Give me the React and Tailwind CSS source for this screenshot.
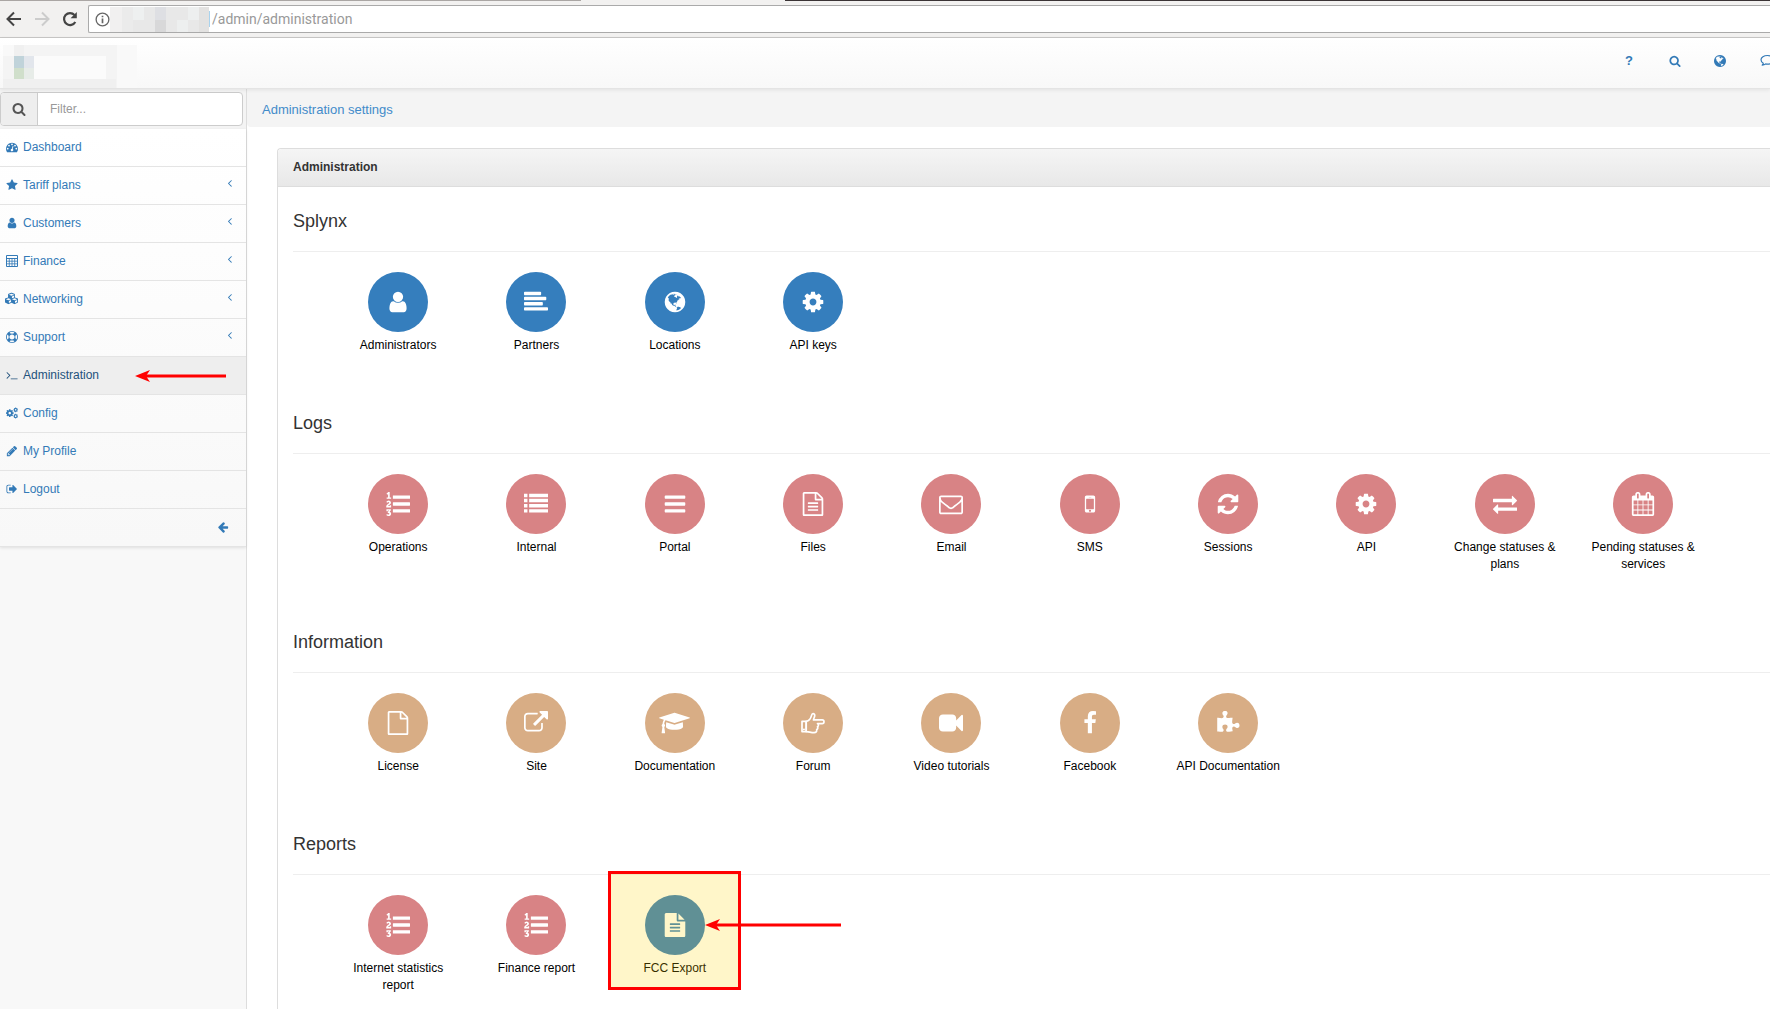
import React from "react";
import { FaCubes } from "react-icons/fa";

const COG =
  "M1152 896q0-106-75-181t-181-75-181 75-75 181 75 181 181 75 181-75 75-181zm512-109v222q0 12-8 23t-20 13l-185 28q-19 54-39 91 35 50 107 138 10 12 10 25t-9 23q-27 37-99 108t-94 71q-12 0-26-9l-138-108q-44 23-91 38-16 136-29 186-7 28-36 28h-222q-14 0-24.5-8.5t-11.5-21.5l-28-184q-49-16-90-37l-141 107q-10 9-25 9-14 0-25-11-126-114-165-168-7-10-7-23 0-12 8-23 15-21 51-66.5t54-70.5q-27-50-41-99l-183-27q-13-2-21-12.5t-8-23.5v-222q0-12 8-23t19-13l186-28q14-46 39-92-40-57-107-138-10-12-10-24 0-10 9-23 26-36 98.5-107.5t94.5-71.5q13 0 26 10l138 107q44-23 91-38 16-136 29-186 7-28 36-28h222q14 0 24.5 8.5t11.5 21.5l28 184q49 16 90 37l142-107q9-9 24-9 13 0 25 10 129 119 165 170 7 8 7 22 0 12-8 23-15 21-51 66.5t-54 70.5q26 50 41 98l183 28q13 2 21 12.5t8 23.5z";

const FILE =
  "M1596 380q28 28 48 76t20 88v1152q0 40-28 68t-68 28h-1344q-40 0-68-28t-28-68v-1600q0-40 28-68t68-28h896q40 0 88 20t76 48zm-444-244v376h376q-10-29-22-41l-313-313q-12-12-41-22zm384 1528v-1024h-416q-40 0-68-28t-28-68v-416h-768v1536h1280z";

const PATHS = {
  user: "M1536 1399q0 109-62.5 187t-150.5 78h-854q-88 0-150.5-78t-62.5-187q0-85 8.5-160.5t31.5-152 58.5-131 94-89 134.5-34.5q131 128 313 128t313-128q76 0 134.5 34.5t94 89 58.5 131 31.5 152 8.5 160.5zm-256-887q0 159-112.5 271.5t-271.5 112.5-271.5-112.5-112.5-271.5 112.5-271.5 271.5-112.5 271.5 112.5 112.5 271.5z",
  alignLeft:
    "M1792 1344v128q0 26-19 45t-45 19h-1664q-26 0-45-19t-19-45v-128q0-26 19-45t45-19h1664q26 0 45 19t19 45zm-384-384v128q0 26-19 45t-45 19h-1280q-26 0-45-19t-19-45v-128q0-26 19-45t45-19h1280q26 0 45 19t19 45zm256-384v128q0 26-19 45t-45 19h-1536q-26 0-45-19t-19-45v-128q0-26 19-45t45-19h1536q26 0 45 19t19 45zm-384-384v128q0 26-19 45t-45 19h-1152q-26 0-45-19t-19-45v-128q0-26 19-45t45-19h1152q26 0 45 19t19 45z",
  globe:
    "M896 128q209 0 385.5 103t279.5 279.5 103 385.5-103 385.5-279.5 279.5-385.5 103-385.5-103-279.5-279.5-103-385.5 103-385.5 279.5-279.5 385.5-103zm274 521q-2 1-9.5 9.5t-13.5 9.5q2 0 4.5-5t5-11 3.5-7q6-7 22-15 14-6 52-12 34-8 51 11-2-2 9.5-13t14.5-12q3-2 15-4.5t15-7.5l2-22q-12 1-17.5-7t-6.5-21q0 2-6 8 0-7-4.5-8t-11.5 1-9 1q-10-3-15-7.5t-8-16.5-4-15q-2-5-9.5-11t-9.5-10q-1-2-2.5-5.5t-3-6.5-4-5.5-5.5-2.5-7 5-7.5 10-4.5 5q-3-2-6-1.5t-4.5 1-4.5 3-5 3.5q-3 2-8.5 3t-8.5 2q15-5-1-11-10-4-16-3 9-4 7.5-12t-8.5-14h5q-1-4-8.5-8.5t-17.5-8.5-13-6q-8-5-34-9.5t-33-.5q-5 6-4.5 10.5t4 14 3.5 12.5q1 6-5.5 13t-6.5 12q0 7 14 15.5t10 21.5q-3 8-16 16t-16 12q-5 8-1.5 18.5t10.5 16.5q2 2 1.5 4t-3.5 4.5-5.5 4-6.5 3.5l-3 2q-11 5-20.5-6t-13.5-26q-7-25-16-30-23-8-29 1-5-13-41-26-25-9-58-4 6-1 0-15-7-15-19-12 3-6 4-17.5t1-13.5q3-13 12-23 1-1 7-8.5t9.5-13.5.5-6q35 4 50-11 5-5 11.5-17t10.5-17q9-6 14-5.5t14.5 5.5 14.5 5q14 1 15.5-11t-7.5-20q12 1 3-17-4-7-8-9-12-4-27 5-8 4 2 8-1-1-9.5 10.5t-16.5 17.5-16-5q-1-1-5.5-13.5t-9.5-13.5q-8 0-16 15 3-8-11-15t-24-8q19-12-8-27-7-4-20.5-5t-19.5 4q-5 7-5.5 11.5t5 8 10.5 5.5 11.5 4 8.5 3q14 10 8 14-2 1-8.5 3.5t-11.5 4.5-6 4q-3 4 0 14t-2 14q-5-5-9-17.5t-7-16.5q7 9-25 6l-10-1q-4 0-16 2t-20.5 1-13.5-8q-4-8 0-20 1-4 4-2-4-3-11-9.5t-10-8.5q-46 15-94 41 6 1 12-1 5-2 13-6.5t10-5.5q34-14 42-7l5-5q14 16 20 25-7-4-30-1-20 6-22 12 7 12 5 18-4-3-11.5-10t-14.5-11-15-5q-16 0-22 1-146 80-235 222 7 7 12 8 4 1 5 9t2.5 11 11.5-3q9 8 3 19 1-1 44 27 19 17 21 21 3 11-10 18-1-2-9-9t-9-4q-3 5 .5 18.5t10.5 12.5q-7 0-9.5 16t-2.5 35.5-1 23.5l2 1q-3 12 5.5 34.5t21.5 19.5q-13 3 20 43 6 8 8 9 3 2 12 7.5t15 10 10 10.5q4 5 10 22.5t14 23.5q-2 6 9.5 20t10.5 23q-1 0-2.5 1t-2.5 1q3 7 15.5 14t15.5 13q1 3 2 10t3 11 8 2q2-20-24-62-15-25-17-29-3-5-5.5-15.5t-4.5-14.5q2 0 6 1.5t8.5 3.5 7.5 4 2 3q-3 7 2 17.5t12 18.5 17 19 12 13q6 6 14 19.5t0 13.5q9 0 20 10.5t17 19.5q5 8 8 26t5 24q2 7 8.5 13.5t12.5 9.5l16 8 13 7q5 2 18.5 10.5t21.5 11.5q10 4 16 4t14.5-2.5 13.5-3.5q15-2 29 15t21 21q36 19 55 11-2 1 .5 7.5t8 15.5 9 14.5 5.5 8.5q5 6 18 15t18 15q6-4 7-9-3 8 7 20t18 10q14-3 14-32-31 15-49-18 0-1-2.5-5.5t-4-8.5-2.5-8.5 0-7.5 5-3q9 0 10-3.5t-2-12.5-4-13q-1-8-11-20t-12-15q-5 9-16 8t-16-9q0 1-1.5 5.5t-1.5 6.5q-13 0-15-1 1-3 2.5-17.5t3.5-22.5q1-4 5.5-12t7.5-14.5 4-12.5-4.5-9.5-17.5-2.5q-19 1-26 20-1 3-3 10.5t-5 11.5-9 7q-7 3-24 2t-24-5q-13-8-22.5-29t-9.5-37q0-10 2.5-26.5t3-25-5.5-24.5q3-2 9-9.5t10-10.5q2-1 4.5-1.5t4.5 0 4-1.5 3-6q-1-1-4-3-3-3-4-3 7 3 28.5-1.5t27.5 1.5q15 11 22-2 0-1-2.5-9.5t-.5-13.5q5 27 29 9 3 3 15.5 5t17.5 5q3 2 7 5.5t5.5 4.5 5-.5 8.5-6.5q10 14 12 24 11 40 19 44 7 3 11 2t4.5-9.5 0-14-1.5-12.5l-1-8v-18l-1-8q-15-3-18.5-12t1.5-18.5 15-18.5q1-1 8-3.5t15.5-6.5 12.5-8q21-19 15-35 7 0 11-9-1 0-5-3t-7.5-5-4.5-2q9-5 2-16 5-3 7.5-11t7.5-10q9 12 21 2 8-8 1-16 5-7 20.5-10.5t18.5-9.5q7 2 8-2t1-12 3-12q4-5 15-9t13-5l17-11q3-4 0-4 18 2 31-11 10-11-6-20 3-6-3-9.5t-15-5.5q3-1 11.5-.5t10.5-1.5q15-10-7-16-17-5-43 12zm-163 877q206-36 351-189-3-3-12.5-4.5t-12.5-3.5q-18-7-24-8 1-7-2.5-13t-8-9-12.5-8-11-7q-2-2-7-6t-7-5.5-7.5-4.5-8.5-2-10 1l-3 1q-3 1-5.5 2.5t-5.5 3-4 3 0 2.5q-21-17-36-22-5-1-11-5.5t-10.5-7-10-1.5-11.5 7q-5 5-6 15t-2 13q-7-5 0-17.5t2-18.5q-3-6-10.5-4.5t-12 4.5-11.5 8.5-9 6.5-8.5 5.5-8.5 7.5q-3 4-6 12t-5 11q-2-4-11.5-6.5t-9.5-5.5q2 10 4 35t5 38q7 31-12 48-27 25-29 40-4 22 12 26 0 7-8 20.5t-7 21.5q0 6 2 16z",
  cog: COG,
  listOl:
    "M381 1620q0 80-54.5 126t-135.5 46q-106 0-172-66l57-88q49 45 106 45 29 0 50.5-14.5t21.5-42.5q0-64-105-56l-26-56q8-10 32.5-43.5t42.5-54 37-38.5v-1q-16 0-48.5 1t-48.5 1v53h-106v-152h333v88l-95 115q51 12 81 49t30 88zm2-627v159h-362q-6-36-6-54 0-51 23.5-93t56.5-68 66-47.5 56.5-43.5 23.5-45q0-25-14.5-38.5t-39.5-13.5q-46 0-81 58l-85-59q24-51 71.5-79.5t105.5-28.5q73 0 123 41.5t50 112.5q0 50-34 91.5t-75 64.5-75.5 50.5-35.5 52.5h127v-60h105zm1409 319v192q0 13-9.5 22.5t-22.5 9.5h-1216q-13 0-22.5-9.5t-9.5-22.5v-192q0-14 9-23t23-9h1216q13 0 22.5 9.5t9.5 22.5zm-1408-899v99h-335v-99h107q0-41 .5-121.5t.5-121.5v-12h-2q-8 17-50 54l-71-76 136-127h106v404h108zm1408 387v192q0 13-9.5 22.5t-22.5 9.5h-1216q-13 0-22.5-9.5t-9.5-22.5v-192q0-14 9-23t23-9h1216q13 0 22.5 9.5t9.5 22.5zm0-512v192q0 13-9.5 22.5t-22.5 9.5h-1216q-13 0-22.5-9.5t-9.5-22.5v-192q0-13 9.5-22.5t22.5-9.5h1216q13 0 22.5 9.5t9.5 22.5z",
  list: "M0 1280h256v256h-256zM384 1280h1408v256h-1408zM0 896h256v256h-256zM384 896h1408v256h-1408zM0 512h256v256h-256zM384 512h1408v256h-1408zM0 128h256v256h-256zM384 128h1408v256h-1408z",
  bars: "M1664 1344v128q0 26-19 45t-45 19h-1408q-26 0-45-19t-19-45v-128q0-26 19-45t45-19h1408q26 0 45 19t19 45zm0-512v128q0 26-19 45t-45 19h-1408q-26 0-45-19t-19-45v-128q0-26 19-45t45-19h1408q26 0 45 19t19 45zm0-512v128q0 26-19 45t-45 19h-1408q-26 0-45-19t-19-45v-128q0-26 19-45t45-19h1408q26 0 45 19t19 45z",
  file: FILE,
  fileText:
    FILE +
    "m-1024-864q0-14 9-23t23-9h704q14 0 23 9t9 23v64q0 14-9 23t-23 9h-704q-14 0-23-9t-9-23v-64zm736 224q14 0 23 9t9 23v64q0 14-9 23t-23 9h-704q-14 0-23-9t-9-23v-64q0-14 9-23t23-9h704zm0 256q14 0 23 9t9 23v64q0 14-9 23t-23 9h-704q-14 0-23-9t-9-23v-64q0-14 9-23t23-9h704z",
  fileSolid:
    "M1596 476q14 14 28 36h-472v-472q22 14 36 28zm-476 164h544v1056q0 40-28 68t-68 28h-1344q-40 0-68-28t-28-68v-1600q0-40 28-68t68-28h800v544q0 40 28 68t68 28zm160 736v-64q0-14-9-23t-23-9h-704q-14 0-23 9t-9 23v64q0 14 9 23t23 9h704q14 0 23-9t9-23zm0-256v-64q0-14-9-23t-23-9h-704q-14 0-23 9t-9 23v64q0 14 9 23t23 9h704q14 0 23-9t9-23zm0-256v-64q0-14-9-23t-23-9h-704q-14 0-23 9t-9 23v64q0 14 9 23t23 9h704q14 0 23-9t9-23z",
  envelope:
    "M1664 1504v-768q-32 36-69 66-268 206-426 338-51 43-83 67t-86.5 48.5-102.5 24.5h-2q-48 0-102.5-24.5t-86.5-48.5-83-67q-158-132-426-338-37-30-69-66v768q0 13 9.5 22.5t22.5 9.5h1472q13 0 22.5-9.5t9.5-22.5zm0-1051v-24.5l-.5-13-3-12.5-5.5-9-9-7.5-14-2.5h-1472q-13 0-22.5 9.5t-9.5 22.5q0 168 147 284 193 152 401 317 6 5 35 29.5t46 37.5 44.5 31.5 50.5 27.5 43 9h2q20 0 43-9t50.5-27.5 44.5-31.5 46-37.5 35-29.5q208-165 401-317 54-43 100.5-115.5t46.5-131.5zm128-37v1088q0 66-47 113t-113 47h-1472q-66 0-113-47t-47-113v-1088q0-66 47-113t113-47h1472q66 0 113 47t47 113z",
  mobile:
    "M976 1408q0-33-23.5-56.5t-56.5-23.5-56.5 23.5-23.5 56.5 23.5 56.5 56.5 23.5 56.5-23.5 23.5-56.5zm208-160v-704q0-13-9.5-22.5t-22.5-9.5h-512q-13 0-22.5 9.5t-9.5 22.5v704q0 13 9.5 22.5t22.5 9.5h512q13 0 22.5-9.5t9.5-22.5zm-192-848q0-16-16-16h-160q-16 0-16 16t16 16h160q16 0 16-16zm288-16v1024q0 52-38 90t-90 38h-512q-52 0-90-38t-38-90v-1024q0-52 38-90t90-38h512q52 0 90 38t38 90z",
  refresh:
    "M1639 1056q0 5-1 7-64 268-268 434.5t-478 166.5q-146 0-282.5-55t-243.5-157l-129 129q-19 19-45 19t-45-19-19-45v-448q0-26 19-45t45-19h448q26 0 45 19t19 45-19 45l-137 137q71 66 161 102t187 36q134 0 250-65t186-179q11-17 53-117 8-23 30-23h192q13 0 22.5 9.5t9.5 22.5zm25-800v448q0 26-19 45t-45 19h-448q-26 0-45-19t-19-45 19-45l138-138q-148-137-349-137-134 0-250 65t-186 179q-11 17-53 117-8 23-30 23h-199q-13 0-22.5-9.5t-9.5-22.5v-7q65-268 270-434.5t480-166.5q146 0 284 55.5t245 156.5l130-129q19-19 45-19t45 19 19 45z",
  exchange:
    "M1792 1184v192q0 13-9.5 22.5t-22.5 9.5h-1376v192q0 13-9.5 22.5t-22.5 9.5q-12 0-24-10l-319-320q-9-9-9-22 0-14 9-23l320-320q9-9 23-9 13 0 22.5 9.5t9.5 22.5v192h1376q13 0 22.5 9.5t9.5 22.5zm0-544q0 14-9 23l-320 320q-9 9-23 9-13 0-22.5-9.5t-9.5-22.5v-192h-1376q-13 0-22.5-9.5t-9.5-22.5v-192q0-13 9.5-22.5t22.5-9.5h1376v-192q0-14 9-23t23-9q12 0 24 10l319 319q9 9 9 23z",
  calendar:
    "M192 1664h288v-288h-288v288zm352 0h320v-288h-320v288zm-352-352h288v-320h-288v320zm352 0h320v-320h-320v320zm-352-384h288v-288h-288v288zm736 736h320v-288h-320v288zm-384-736h320v-288h-320v288zm768 736h288v-288h-288v288zm-384-352h320v-320h-320v320zm-352-864v-288q0-13-9.5-22.5t-22.5-9.5h-64q-13 0-22.5 9.5t-9.5 22.5v288q0 13 9.5 22.5t22.5 9.5h64q13 0 22.5-9.5t9.5-22.5zm736 864h288v-320h-288v320zm-384-384h320v-288h-320v288zm384 0h288v-288h-288v288zm32-480v-288q0-13-9.5-22.5t-22.5-9.5h-64q-13 0-22.5 9.5t-9.5 22.5v288q0 13 9.5 22.5t22.5 9.5h64q13 0 22.5-9.5t9.5-22.5zm384-64v1280q0 52-38 90t-90 38h-1408q-52 0-90-38t-38-90v-1280q0-52 38-90t90-38h128v-96q0-66 47-113t113-47h64q66 0 113 47t47 113v96h384v-96q0-66 47-113t113-47h64q66 0 113 47t47 113v96h128q52 0 90 38t38 90z",
  external:
    "M1408 928v320q0 119-84.5 203.5t-203.5 84.5h-832q-119 0-203.5-84.5t-84.5-203.5v-832q0-119 84.5-203.5t203.5-84.5h704q14 0 23 9t9 23v64q0 14-9 23t-23 9h-704q-66 0-113 47t-47 113v832q0 66 47 113t113 47h832q66 0 113-47t47-113v-320q0-14 9-23t23-9h64q14 0 23 9t9 23zm384-864v512q0 26-19 45t-45 19-45-19l-176-176-652 652q-10 10-23 10t-23-10l-114-114q-10-10-10-23t10-23l652-652-176-176q-19-19-19-45t19-45 45-19h512q26 0 45 19t19 45z",
  video:
    "M1792 352v1088q0 42-39 59-13 5-25 5-27 0-45-19l-403-403v166q0 119-84.5 203.5t-203.5 84.5h-704q-119 0-203.5-84.5t-84.5-203.5v-704q0-119 84.5-203.5t203.5-84.5h704q119 0 203.5 84.5t84.5 203.5v165l403-402q18-19 45-19 12 0 25 5 39 17 39 59z",
  facebook:
    "M1343 12v264h-157q-86 0-116 36t-30 108v189h293l-39 296h-254v759h-306v-759h-255v-296h255v-218q0-186 104-288.5t277-102.5q147 0 228 12z",
  puzzle:
    "M1755 1083q0 81-44.5 135t-123.5 54q-41 0-77.5-17.5t-59-38-56.5-38-71-17.5q-110 0-110 124 0 39 16 115t15 115v5q-22 0-33 1-34 3-97.5 11.5t-115.5 13.5-98 5q-61 0-103-26.5t-42-83.5q0-37 17.5-71t38-56.5 38-59 17.5-77.5q0-79-54-123.5t-135-44.5q-84 0-143 45.5t-59 127.5q0 43 15 83t33.5 64.5 33.5 53 15 50.5q0 45-46 89-37 35-117 35-95 0-245-24-9-2-27.5-4t-27.5-4l-13-2q-1 0-3-1-2 0-2-1v-1024q2 1 17.5 3.5t34 5 21.5 3.5q150 24 245 24 80 0 117-35 46-44 46-89 0-22-15-50.5t-33.5-53-33.5-64.5-15-83q0-82 59-127.5t144-45.5q80 0 134 44.5t54 123.5q0 41-17.5 77.5t-38 59-38 56.5-17.5 71q0 57 42 83.5t103 26.5q64 0 180-15t163-17v2q-1 2-3.5 17.5t-5 34-3.5 21.5q-24 150-24 245 0 80 35 117 44 46 89 46 22 0 50.5-15t53-33.5 64.5-33.5 83-15q82 0 127.5 59t45.5 143z",
  dashboard:
    "M384 1152q0-53-37.5-90.5t-90.5-37.5-90.5 37.5-37.5 90.5 37.5 90.5 90.5 37.5 90.5-37.5 37.5-90.5zm192-448q0-53-37.5-90.5t-90.5-37.5-90.5 37.5-37.5 90.5 37.5 90.5 90.5 37.5 90.5-37.5 37.5-90.5zm428 481l101-382q6-26-7.5-48.5t-38.5-29.5-48 6.5-30 39.5l-101 382q-60 5-107 43.5t-63 98.5q-20 77 20 146t117 89 146-20 89-117q16-60-6-117t-72-91zm660-33q0-53-37.5-90.5t-90.5-37.5-90.5 37.5-37.5 90.5 37.5 90.5 90.5 37.5 90.5-37.5 37.5-90.5zm-640-640q0-53-37.5-90.5t-90.5-37.5-90.5 37.5-37.5 90.5 37.5 90.5 90.5 37.5 90.5-37.5 37.5-90.5zm448 192q0-53-37.5-90.5t-90.5-37.5-90.5 37.5-37.5 90.5 37.5 90.5 90.5 37.5 90.5-37.5 37.5-90.5zm320 448q0 261-141 483-19 29-54 29h-1402q-35 0-54-29-141-221-141-483 0-182 71-348t191-286 286-191 348-71 348 71 286 191 191 286 71 348z",
  star: "M1728 647q0 22-26 48l-363 354 86 500q1 7 1 20 0 21-10.5 35.5t-30.5 14.5q-19 0-40-12l-449-236-449 236q-22 12-40 12-21 0-31.5-14.5t-10.5-35.5q0-6 2-20l86-500-364-354q-25-27-25-48 0-37 56-46l502-73 225-455q19-41 49-41t49 41l225 455 502 73q56 9 56 46z",
  support:
    "M896 0q182 0 348 71t286 191 191 286 71 348-71 348-191 286-286 191-348 71-348-71-286-191-191-286-71-348 71-348 191-286 286-191 348-71zm0 128q-190 0-361 90l194 194q82-28 167-28t167 28l194-194q-171-90-361-90zm-678 1129l194-194q-28-82-28-167t28-167l-194-194q-90 171-90 361t90 361zm678 407q190 0 361-90l-194-194q-82 28-167 28t-167-28l-194 194q171 90 361 90zm0-384q159 0 271.5-112.5t112.5-271.5-112.5-271.5-271.5-112.5-271.5 112.5-112.5 271.5 112.5 271.5 271.5 112.5zm484-217l194 194q90-171 90-361t-90-361l-194 194q28 82 28 167t-28 167z",
  terminal:
    "M649 983l-466 466q-10 10-23 10t-23-10l-50-50q-10-10-10-23t10-23l393-393-393-393q-10-10-10-23t10-23l50-50q10-10 23-10t23 10l466 466q10 10 10 23t-10 23zm1079 457v64q0 14-9 23t-23 9h-960q-14 0-23-9t-9-23v-64q0-14 9-23t23-9h960q14 0 23 9t9 23z",
  pencil:
    "M491 1536l91-91-235-235-91 91v107h128v128h107zm523-928q0-22-22-22-10 0-17 7l-542 542q-7 7-7 17 0 22 22 22 10 0 17-7l542-542q7-7 7-17zm-54-192l416 416-832 832h-416v-416zm683 96q0 53-37 90l-166 166-416-416 166-165q36-38 90-38 53 0 91 38l235 234q37 39 37 91z",
  signOut:
    "M704 1440q0 4 1 20t.5 26.5-3 23.5-10 19.5-20.5 6.5h-320q-119 0-203.5-84.5t-84.5-203.5v-704q0-119 84.5-203.5t203.5-84.5h320q13 0 22.5 9.5t9.5 22.5q0 4 1 20t.5 26.5-3 23.5-10 19.5-20.5 6.5h-320q-66 0-113 47t-47 113v704q0 66 47 113t113 47h312l11.5 1 11.5 3 8 5.5 7 9 2 13.5zm928-544q0 26-19 45l-544 544q-19 19-45 19t-45-19-19-45v-288h-448q-26 0-45-19t-19-45v-384q0-26 19-45t45-19h448v-288q0-26 19-45t45-19 45 19l544 544q19 19 19 45z",
  arrowLeft:
    "M1664 896v128q0 53-32.5 90.5t-84.5 37.5h-704l293 294q38 36 38 90t-38 90l-75 76q-37 37-90 37-52 0-91-37l-651-652q-37-37-37-90 0-52 37-91l651-650q38-38 91-38 52 0 90 38l75 74q38 38 38 91t-38 91l-293 293h704q52 0 84.5 37.5t32.5 90.5z",
  search:
    "M1216 832q0-185-131.5-316.5t-316.5-131.5-316.5 131.5-131.5 316.5 131.5 316.5 316.5 131.5 316.5-131.5 131.5-316.5zm512 832q0 52-38 90t-90 38q-54 0-90-38l-343-342q-179 124-399 124-143 0-273.5-55.5t-225-150-150-225-55.5-273.5 55.5-273.5 150-225 225-150 273.5-55.5 273.5 55.5 225 150 150 225 55.5 273.5q0 220-124 399l343 343q37 37 37 90z",
  angleLeft:
    "M1171 544q0 13-10 23l-393 393 393 393q10 10 10 23t-10 23l-50 50q-10 10-23 10t-23-10l-466-466q-10-10-10-23t10-23l466-466q10-10 23-10t23 10l50 50q10 10 10 23z",
};

function Icon({ name, className }) {
  if (name === "cubes") return <FaCubes className="h-[13px] w-[15px] shrink-0" aria-hidden="true" />;
  if (name === "cap")
    return (
      <svg viewBox="0 0 2304 1792" className="h-6 w-[31px]" fill="currentColor" aria-hidden="true">
        <path d="M1774 836l18 316q4 69-82 128t-235 93.5-323 34.5-323-34.5-235-93.5-82-128l18-316 574 181q22 7 48 7t48-7zm530-324q0 23-22 31l-1120 352q-4 1-10 1t-10-1l-652-206q-43 34-71 111.5t-34 178.5q63 36 63 109 0 69-58 107l58 433q2 14-8 25-9 11-24 11h-192q-15 0-24-11-10-11-8-25l58-433q-58-38-58-107 0-73 65-111 11-207 98-330l-333-104q-22-8-22-31t22-31l1120-352q4-1 10-1t10 1l1120 352q22 8 22 31z" />
      </svg>
    );
  if (name === "hand")
    return (
      <svg viewBox="0 0 24 24" className={className} fill="none" stroke="currentColor" strokeWidth="1.7" strokeLinejoin="round" strokeLinecap="round" aria-hidden="true">
        <path d="M1 10.4h4.2v10.2H1z" />
        <path d="M5.2 10.4c2.6-.5 4.6-3.2 5.3-5.8.3-1.3.8-1.9 1.5-1.9 1.300 0 1.900.9 1.700 2.200-.2 1.700-1.200 2.700-1.200 4h8.700c2.400 0 2.400 3.700 0 3.700h-4.700c1.300.8 1.200 2.500 0 3.200.7 1.200.2 2.300-.8 2.800.3 2.200-.7 3-2.600 3-3.400 0-5-1-7.900-1z" />
        <path d="M2.800 18.400h.3" />
      </svg>
    );
  if (name === "calculator")
    return (
      <svg viewBox="0 0 12 12" className={className} fill="none" stroke="currentColor" aria-hidden="true">
        <path d="M.5.5h11v11H.5zM.5 3.500h11" strokeWidth="1" />
        <path d="M.5 6.200h11M.5 8.800h11M3.300 3.500v8M6 3.500v8M8.700 3.500v8" strokeWidth=".8" />
      </svg>
    );
  if (name === "cogs")
    return (
      <svg viewBox="0 0 1792 1792" className={className} fill="currentColor" aria-hidden="true">
        <path d={COG} transform="translate(-120 230) scale(.76)" />
        <path d={COG} transform="translate(1040 20) scale(.45)" />
        <path d={COG} transform="translate(1040 960) scale(.45)" />
      </svg>
    );
  if (name === "comments")
    return (
      <svg viewBox="0 0 18 16" className={className} fill="none" stroke="currentColor" strokeWidth="1.200" strokeLinejoin="round" aria-hidden="true">
        <path d="M7.500 2.500C3.900 2.500 1 4.300 1 6.800c0 1.500.9 2.700 2.300 3.400-.1.800-.5 1.400-1.100 2 1.400-.1 2.600-.6 3.500-1.300.6.100 1.200.2 1.800.2 3.600 0 6.500-1.900 6.500-4.300S11.100 2.500 7.500 2.500z" />
        <path d="M15.500 6c1.200.8 1.700 1.900 1.500 3" />
      </svg>
    );
  return (
    <svg viewBox="0 0 1792 1792" className={className} fill="currentColor" aria-hidden="true">
      <path d={PATHS[name]} />
    </svg>
  );
}

function RedArrow({ className }) {
  return (
    <svg viewBox="0 0 200 14" preserveAspectRatio="xMinYMid slice" className={className} aria-hidden="true">
      <path d="M9 7h191" stroke="#f00" strokeWidth="3" />
      <path d="M0 7L15 1l-4 6 4 6z" fill="#f00" />
    </svg>
  );
}

const MENU = [
  { icon: "dashboard", label: "Dashboard" },
  { icon: "star", label: "Tariff plans", sub: true },
  { icon: "user", label: "Customers", sub: true },
  { icon: "calculator", label: "Finance", sub: true },
  { icon: "cubes", label: "Networking", sub: true },
  { icon: "support", label: "Support", sub: true },
  { icon: "terminal", label: "Administration", active: true },
  { icon: "cogs", label: "Config" },
  { icon: "pencil", label: "My Profile" },
  { icon: "signOut", label: "Logout" },
];

const BLUE = "bg-[#357ebd]";
const RED = "bg-[#d88385]";
const TAN = "bg-[#d8ad85]";

const SECTIONS = [
  {
    title: "Splynx",
    color: BLUE,
    items: [
      ["user", "Administrators"],
      ["alignLeft", "Partners"],
      ["globe", "Locations"],
      ["cog", "API keys"],
    ],
  },
  {
    title: "Logs",
    color: RED,
    items: [
      ["listOl", "Operations"],
      ["list", "Internal"],
      ["bars", "Portal"],
      ["fileText", "Files"],
      ["envelope", "Email"],
      ["mobile", "SMS"],
      ["refresh", "Sessions"],
      ["cog", "API"],
      ["exchange", "Change statuses & plans"],
      ["calendar", "Pending statuses & services"],
    ],
  },
  {
    title: "Information",
    color: TAN,
    items: [
      ["file", "License"],
      ["external", "Site"],
      ["cap", "Documentation"],
      ["hand", "Forum"],
      ["video", "Video tutorials"],
      ["facebook", "Facebook"],
      ["puzzle", "API Documentation"],
    ],
  },
  {
    title: "Reports",
    color: RED,
    items: [
      ["listOl", "Internet statistics report"],
      ["listOl", "Finance report"],
      ["fileSolid", "FCC Export", true],
    ],
  },
];

function Tile({ icon, label, color, marked }) {
  return (
    <li className="relative px-[15px]">
      <a href="#" className="flex flex-col items-center gap-[5px] text-center text-xs/[17px] text-black">
        <span className={`flex size-[60px] items-center justify-center rounded-full text-white ${marked ? BLUE : color}`}>
          <Icon name={icon} className="size-6" />
        </span>
        {label}
      </a>
      {marked && (
        <>
          <span className="pointer-events-none absolute -top-6 left-[2px] h-[119px] w-[133px] border-3 border-[#f00] bg-[#ffd400]/21" />
          <RedArrow className="pointer-events-none absolute top-[23px] left-[99px] h-[14px] w-[136px]" />
        </>
      )}
    </li>
  );
}

function Section({ title, color, items }) {
  return (
    <section className="pb-[59px]">
      <h2 className="border-b border-[#eee] pb-5 text-lg/5 text-[#333]">{title}</h2>
      <ul className="ml-9 mt-5 grid w-[1660px] grid-cols-12">
        {items.map(([icon, label, marked]) => (
          <Tile key={label} icon={icon} label={label} color={color} marked={marked} />
        ))}
      </ul>
    </section>
  );
}

function BrowserBar() {
  return (
    <div className="border-b border-[#c9c8c7] bg-[#f2f1f0]">
      <div className="flex h-px">
        <span className="w-[581px] bg-[#aaa6a4]" />
        <span className="w-[204px] bg-[#f2f1f0]" />
        <span className="flex-1 bg-[#3a3335]" />
      </div>
      <div className="flex h-9 items-center pl-1">
        <button aria-label="Back" className="flex w-7 pl-[2px] text-[#444]">
          <svg viewBox="0 0 16 16" className="size-4" fill="none" stroke="currentColor" strokeWidth="2">
            <path d="M15 8H2.500M8 1.500L1.500 8 8 14.500" />
          </svg>
        </button>
        <button aria-label="Forward" className="flex w-7 pl-[2px] text-[#ccc]">
          <svg viewBox="0 0 16 16" className="size-4" fill="none" stroke="currentColor" strokeWidth="2">
            <path d="M1 8h12.500M8 1.500L14.500 8 8 14.500" />
          </svg>
        </button>
        <button aria-label="Reload" className="flex w-7 pl-[2px] text-[#444]">
          <svg viewBox="0 0 16 16" className="size-4" fill="none" stroke="currentColor" strokeWidth="2.200">
            <path d="M13.300 11A6 6 0 1 1 12.500 4" />
            <path d="M14.800 1v6.200H8.600z" fill="currentColor" stroke="none" />
          </svg>
        </button>
        <div className="flex h-7 flex-1 items-center rounded-l-xs border border-r-0 border-[#aaa] bg-white pl-[6px]">
          <svg viewBox="0 0 16 16" className="size-[15px]" fill="none" stroke="#666" strokeWidth="1.400" aria-hidden="true">
            <circle cx="8" cy="8" r="6.800" />
            <path d="M8 7v5M8 4v1.700" strokeWidth="1.800" />
          </svg>
          <svg viewBox="0 0 99 25" className="h-[25px] w-[99px]" aria-hidden="true">
            <path fill="#e8e8e8" d="M0 0h99v25H0z" />
            <path fill="#f1f0f0" d="M0 0h12v25H0z" />
            <path fill="#ebebeb" d="M12 0h11v25H12z" />
            <path fill="#eef0f0" d="M23 0h11v13H23z" />
            <path fill="#dedfe3" d="M45 0h11v13H45z" />
            <path fill="#d8d8d9" d="M45 13h11v12H45z" />
            <path fill="#edefef" d="M78 0h11v13H78zM67 13h11v12H67z" />
            <path fill="#e3e2e1" d="M89 0h10v25H89z" />
          </svg>
          <span className="h-4 w-px bg-[#a9d3ee]" />
          <input
            aria-label="Address"
            readOnly
            value="/admin/administration"
            className="ml-[2px] min-w-0 flex-1 bg-transparent font-[Roboto] text-sm text-[#999] outline-none"
          />
        </div>
      </div>
    </div>
  );
}

function Header() {
  return (
    <header className="relative flex h-[51px] items-center justify-between overflow-hidden border-b border-[#e4e4e4] bg-linear-to-b from-white to-[#f8f8f8] shadow-[0_1px_4px_rgba(0,0,0,0.08)]">
      <svg viewBox="0 0 134 44" className="ml-[3px] mt-[7px] h-[44px] w-[134px]" aria-hidden="true">
        <path fill="#f9f9f9" d="M0 0h134v44H0z" />
        <path fill="#f4f4f4" d="M0 11h103v33H0zM11 0h103v44H11z" />
        <path fill="#f0f0f0" d="M11 0h10v11H11zM0 34h113v10H0z" />
        <path fill="#c0d3da" d="M11 11h10v12H11z" />
        <path fill="#d0dfcb" d="M11 23h10v11H11z" />
        <path fill="#e2e6ec" d="M21 11h10v12H21z" />
        <path fill="#e7ece8" d="M21 23h10v11H21z" />
        <path fill="#fbfbfb" d="M31 11h72v23H31z" />
      </svg>
      <nav aria-label="Tools" className="flex items-center pb-1 text-[#337ab7]">
        <button aria-label="Help" className="flex w-[46px] justify-center text-[13px] font-bold">?</button>
        <button aria-label="Search" className="flex w-[46px] justify-center"><Icon name="search" className="size-3" /></button>
        <button aria-label="Language" className="flex w-[44px] justify-center"><Icon name="globe" className="size-[14px]" /></button>
        <button aria-label="Messages" className="-mr-2 ml-[18px] flex"><Icon name="comments" className="h-4 w-[18px]" /></button>
      </nav>
    </header>
  );
}

function Sidebar() {
  return (
    <aside className="w-[247px] shrink-0 border-r border-[#ddd] bg-[#f8f8f8] text-xs">
      <div className="bg-[#f4f4f4] pt-[3px] pr-[3px] pb-[3px]">
        <div className="flex h-[34px] overflow-hidden rounded-sm border border-[#ccc] bg-white">
          <button aria-label="Search menu" className="flex w-[37px] shrink-0 items-center justify-center border-r border-[#ccc] bg-[#eee] pr-px text-[#555]">
            <Icon name="search" className="size-[14px]" />
          </button>
          <input aria-label="Filter" placeholder="Filter..." className="min-w-0 flex-1 px-3 text-xs outline-none placeholder:text-[#999]" />
        </div>
      </div>
      <nav aria-label="Main menu" className="bg-linear-to-b from-white to-[#f8f8f8] shadow-[0_1px_3px_rgba(0,0,0,0.1)]">
        <ul>
          {MENU.map((m) => (
            <li key={m.label} className={`relative border-b border-[#e4e4e4] ${m.active ? "bg-[#eee]" : ""}`}>
              <a href="#" className={`flex h-[37px] items-center pr-[10px] pb-[2px] pl-1 ${m.active ? "text-[#23527c]" : "text-[#337ab7]"}`}>
                <span className="flex w-[15px] justify-center">
                  <Icon name={m.icon} className="size-3" />
                </span>
                <span className="ml-1 flex-1">{m.label}</span>
                {m.sub && <Icon name="angleLeft" className="mb-1 size-3" />}
              </a>
              {m.active && <RedArrow className="pointer-events-none absolute top-3 left-[135px] h-[14px] w-[91px]" />}
            </li>
          ))}
        </ul>
        <div className="flex h-[38px] items-center justify-end border-b border-[#e4e4e4] pr-[17px] pb-[2px]">
          <button aria-label="Collapse menu" className="flex text-[#337ab7]">
            <Icon name="arrowLeft" className="size-3" />
          </button>
        </div>
      </nav>
    </aside>
  );
}

export default function App() {
  return (
    <div className="flex h-screen flex-col overflow-hidden bg-white font-['Liberation_Sans',Arial,sans-serif]">
      <BrowserBar />
      <Header />
      <div className="flex min-h-0 flex-1">
        <Sidebar />
        <main className="min-w-0 flex-1 overflow-hidden">
          <div className="rounded-bl-sm bg-[#f4f4f4] px-[15px] pt-[11px] pb-[7px] text-[13px]/5">
            <a href="#" className="text-[#428bca]">Administration settings</a>
          </div>
          <div className="ml-[30px] mt-[21px] rounded-tl border-t border-l border-[#ddd]">
            <h1 className="rounded-tl border-b border-[#ddd] bg-linear-to-b from-[#f5f5f5] to-[#e8e8e8] px-[15px] pt-2 pb-[9px] text-xs/5 font-bold text-[#333]">
              Administration
            </h1>
            <div className="pt-6 pl-[15px]">
              {SECTIONS.map((s) => (
                <Section key={s.title} {...s} />
              ))}
            </div>
          </div>
        </main>
      </div>
    </div>
  );
}
